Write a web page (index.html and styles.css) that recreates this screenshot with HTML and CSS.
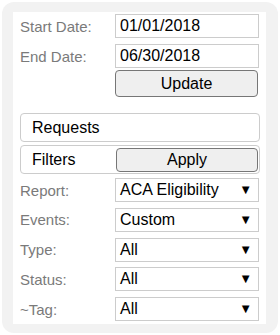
FILE: index.html
```html
<!DOCTYPE html>
<html lang="en">
<head>
    <meta charset="UTF-8">
    <title>Report Filters</title>
    <link rel="stylesheet" href="styles.css">
</head>
<body>

<div class="panel">
    <div class="panel-inner">
        <div class="row">
            <label class="label">Start Date:</label>
            <div class="field">01/01/2018</div>
        </div>
        <div class="row">
            <label class="label">End Date:</label>
            <div class="field">06/30/2018</div>
        </div>
        <div class="row row-btn">
            <span></span>
            <button class="btn">Update</button>
        </div>

        <div class="section section-first">
            <span class="section-title">Requests</span>
        </div>
        <div class="section">
            <span class="section-title">Filters</span>
            <button class="btn btn-apply">Apply</button>
        </div>

        <div class="row row-select">
            <label class="label">Report:</label>
            <div class="field select">ACA Eligibility<span class="arrow">▼</span></div>
        </div>
        <div class="row row-select">
            <label class="label">Events:</label>
            <div class="field select">Custom<span class="arrow">▼</span></div>
        </div>
        <div class="row row-select">
            <label class="label">Type:</label>
            <div class="field select">All<span class="arrow">▼</span></div>
        </div>
        <div class="row row-select">
            <label class="label">Status:</label>
            <div class="field select">All<span class="arrow">▼</span></div>
        </div>
        <div class="row row-select">
            <label class="label">~Tag:</label>
            <div class="field select">All<span class="arrow">▼</span></div>
        </div>
    </div>
</div>

</body>
</html>
```

FILE: styles.css
```css
body {
    margin: 0;
    background-color: #fff;
    font-family: "Liberation Sans", Arial, sans-serif;
}
.panel {
    width: 276px;
    height: 331px;
    margin: 2px 0 0 2px;
    padding: 10px 12px 9px 11px;
    box-sizing: border-box;
    background-color: #f2f2f2;
    border-radius: 12px;
}
.panel-inner {
    height: 100%;
    background-color: #fff;
    padding: 2px 6px 0 7px;
    box-sizing: border-box;
}
.row {
    display: grid;
    grid-template-columns: 95px 144px;
    align-items: center;
    height: 24px;
    margin-bottom: 6px;
}
.row-btn {
    height: 27px;
    margin-top: -4px;
    margin-bottom: 16px;
}
.label {
    font-size: 15px;
    color: #7a7a7a;
}
.field {
    height: 24px;
    line-height: 22px;
    padding: 0 4px;
    border: 1px solid #ccc;
    box-sizing: border-box;
    font-size: 16px;
    color: #000;
}
.select {
    display: flex;
    justify-content: space-between;
}
.arrow {
    font-size: 13px;
    padding-right: 2px;
}
.btn {
    height: 27px;
    width: 143px;
    font-family: inherit;
    font-size: 16px;
    color: #000;
    background-color: #efefef;
    border: 1px solid #767676;
    border-radius: 4px;
    padding: 0;
}
.section {
    display: grid;
    grid-template-columns: 95px 144px;
    align-items: center;
    height: 29px;
    border: 1px solid #ccc;
    border-radius: 4px;
    box-sizing: border-box;
    margin-bottom: 3px;
}
.section-title {
    font-size: 16px;
    padding-left: 11px;
}
.btn-apply {
    height: 24px;
    width: 142px;
}
.row-select {
    margin-bottom: 5.75px;
}
.section + .row-select {
    margin-top: 4px;
}
```
